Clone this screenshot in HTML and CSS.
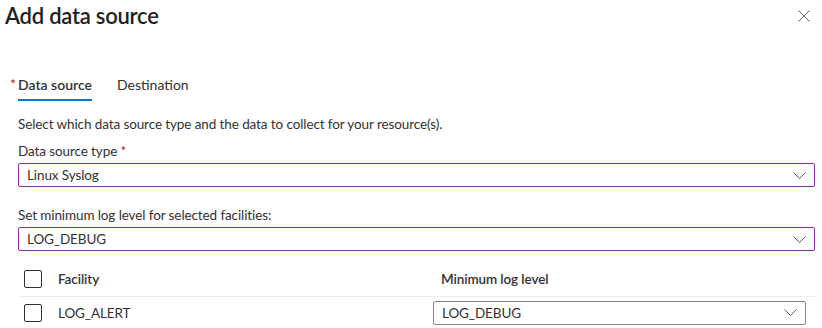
FILE: index.html
```
<!DOCTYPE html>
<html lang="en">
<head>
<meta charset="utf-8">
<title>Add data source</title>
<link rel="stylesheet" href="styles.css">
</head>
<body>
<div class="panel">
  <header class="head">
    <h1 class="title">Add data source</h1>
    <button class="close" aria-label="Close">
      <svg width="12" height="12" viewBox="0 0 12 12"><path d="M0.5 0.5L11.5 11.5M11.5 0.5L0.5 11.5" stroke="#605e5c" stroke-width="1" fill="none"/></svg>
    </button>
  </header>

  <nav class="tabs">
    <a class="tab active"><span class="req tab-req">*</span><span class="tab-text">Data source</span></a>
    <a class="tab"><span class="tab-text">Destination</span></a>
  </nav>

  <section class="content">
    <p class="desc">Select which data source type and the data to collect for your resource(s).</p>

    <label class="field-label">Data source type <span class="req">*</span></label>
    <div class="select focused">
      <span class="select-value">Linux Syslog</span>
      <svg class="chev" width="13" height="7" viewBox="0 0 13 7"><path d="M0.5 0.5L6.5 6.5L12.5 0.5" stroke="#605e5c" stroke-width="1" fill="none"/></svg>
    </div>

    <label class="field-label second">Set minimum log level for selected facilities:</label>
    <div class="select focused">
      <span class="select-value">LOG_DEBUG</span>
      <svg class="chev" width="13" height="7" viewBox="0 0 13 7"><path d="M0.5 0.5L6.5 6.5L12.5 0.5" stroke="#605e5c" stroke-width="1" fill="none"/></svg>
    </div>

    <div class="grid">
      <div class="grid-row grid-head">
        <div class="cell cell-check"><span class="checkbox"></span></div>
        <div class="cell">Facility</div>
        <div class="cell cell-level">Minimum log level</div>
      </div>
      <div class="grid-row">
        <div class="cell cell-check"><span class="checkbox"></span></div>
        <div class="cell">LOG_ALERT</div>
        <div class="cell cell-select">
          <div class="select small">
            <span class="select-value">LOG_DEBUG</span>
            <svg class="chev" width="13" height="7" viewBox="0 0 13 7"><path d="M0.5 0.5L6.5 6.5L12.5 0.5" stroke="#605e5c" stroke-width="1" fill="none"/></svg>
          </div>
        </div>
      </div>
    </div>
  </section>
</div>
</body>
</html>
```
FILE: styles.css
```
* { box-sizing: border-box; }

html, body {
  margin: 0;
  padding: 0;
  background: #ffffff;
}

body {
  font-family: Lato, "Noto Sans", sans-serif;
  font-size: 13.5px;
  letter-spacing: -0.1px;
  color: #323130;
  overflow: hidden;
}

.panel {
  width: 822px;
  height: 328px;
}

.head {
  display: flex;
  justify-content: space-between;
  align-items: flex-start;
  padding-left: 5px;
  padding-right: 12px;
}

.title {
  margin: 0;
  font-size: 22px;
  letter-spacing: -0.25px;
  line-height: 32px;
  font-weight: 600;
  color: #201f1e;
}

.close {
  margin-top: 10px;
  padding: 0;
  border: 0;
  background: none;
  width: 12px;
  height: 12px;
  display: flex;
}

.tabs {
  display: flex;
  gap: 25px;
  margin-top: 43px;
  padding-left: 18px;
  font-size: 14px;
  letter-spacing: 0;
}

.tab {
  display: flex;
  align-items: flex-start;
  line-height: 20px;
  color: #323130;
}

.tab-text {
  padding-bottom: 4px;
  border-bottom: 2px solid transparent;
}

.tab.active .tab-text {
  font-weight: 600;
  border-bottom-color: #0078d4;
}

.req {
  color: #a4262c;
}

.tab-req {
  margin-left: -8px;
  width: 8px;
  line-height: 18px;
}

.content {
  padding-left: 18px;
  padding-right: 7px;
}

.desc {
  margin: 13px 0 0;
  line-height: 20px;
}

.field-label {
  display: block;
  margin-top: 7px;
  line-height: 20px;
}

.field-label.second {
  margin-top: 18px;
}

.select {
  display: flex;
  align-items: center;
  justify-content: space-between;
  height: 24px;
  margin-top: 2px;
  padding: 0 8px 0 8px;
  border: 1px solid #8a8886;
  border-radius: 2px;
  line-height: 20px;
}

.select.focused {
  border-color: #8b2fa8;
}

.chev {
  flex: none;
}

.grid {
  margin-top: 11px;
}

.grid-row {
  display: grid;
  grid-template-columns: 40px 375px 1fr;
  align-items: center;
  height: 31px;
}

.grid-head {
  height: 35px;
  border-bottom: 1px solid #edebe9;
  font-weight: 600;
}

.cell {
  line-height: 20px;
}

.cell-check {
  display: flex;
  padding-left: 6px;
}

.cell-level {
  padding-left: 8px;
}

.cell-select {
  padding-right: 9px;
}

.select.small {
  margin-top: 0;
}

.checkbox {
  display: block;
  width: 18px;
  height: 18px;
  border: 1px solid #323130;
  border-radius: 2px;
}
```
